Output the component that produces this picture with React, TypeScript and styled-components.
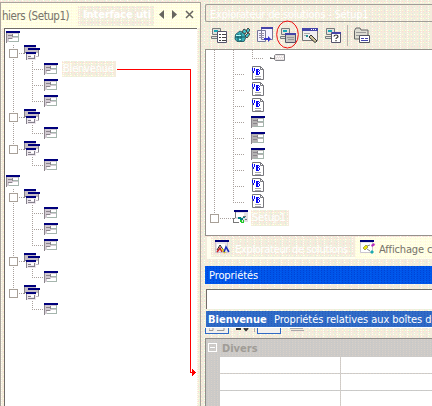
import React from "react";
import styled, { createGlobalStyle, css } from "styled-components";

const Global = createGlobalStyle`
  body { margin: 0; background: #ece9d8; overflow: hidden; }
  * { box-sizing: border-box; }
  svg { display: block; flex: none; }
`;

/* One coloured pixel, repeated on a w × h tile */
const speck = (color: string, w: number, h: number, x: number, y: number) =>
  `conic-gradient(from 0deg at ${w - 1}px 1px, ${color} 25%, transparent 0) ${x}px ${y}px / ${w}px ${h}px`;

const dither = css`
  background:
    ${speck("#dafad6", 5, 3, 0, 0)},
    ${speck("#ffd9d4", 3, 5, 1, 1)},
    ${speck("#fffff2", 7, 2, 2, 0)},
    ${speck("#e0e6e2", 7, 3, 0, 1)},
    ${speck("#ffffd6", 3, 4, 1, 2)},
    #f4ecdd;
`;

const paleDither = css`
  background: ${speck("#fffff4", 2, 3, 0, 0)}, ${speck("#fff0df", 5, 3, 1, 1)}, #ffffe0;
`;

const Window = styled.div`
  width: 432px;
  height: 406px;
  display: flex;
  overflow: hidden;
  font: 11px/16px "DejaVu Sans Condensed", "DejaVu Sans", sans-serif;
  font-stretch: condensed;
  white-space: nowrap;
  position: relative;
  ${dither}
`;

const LeftPane = styled.div`
  width: 201px;
  flex: none;
  margin-top: 2px;
  border: solid #aaa49c;
  border-width: 1px 1px 0 1px;
  display: flex;
  flex-direction: column;
`;

const TabStrip = styled.div`
  height: 25px;
  display: flex;
  align-items: center;
  padding: 0 9px 0 1px;
  color: #77736a;
  ${paleDither}
`;

const FileTab = styled.span`
  width: 76px;
  flex: none;
  font-size: 11.5px;
  letter-spacing: -0.45px;
`;

const ActiveTab = styled.span`
  width: 76px;
  height: 20px;
  padding-left: 5px;
  font-weight: bold;
  font-size: 11px;
  line-height: 18px;
  letter-spacing: -0.1px;
  color: #ffffff;
  ${dither}
`;

const TabControls = styled.div`
  margin-left: auto;
  margin-right: -4px;
  margin-top: -3px;
`;

const FileTree = styled.div`
  flex: 1;
  margin: 0 3px 0 3px;
  border: solid #6f6b66;
  border-width: 1px 0 0 1px;
  background: #fff;
`;

const Row = styled.div`
  height: 16px;
  display: flex;
  align-items: flex-start;
`;

const vDots = "repeating-linear-gradient(#a8a09c 0 1px, transparent 1px 2px)";
const hDots = "repeating-linear-gradient(90deg, #a8a09c 0 1px, transparent 1px 2px)";

type Line = "none" | "full" | "half";

const Guide = styled.span<{ $w: number; $x: number; $line: Line; $branch?: boolean }>`
  width: ${(p) => p.$w}px;
  height: 16px;
  flex: none;
  background-image: ${vDots}, ${hDots};
  background-repeat: no-repeat;
  background-position: ${(p) => p.$x}px 0, ${(p) => p.$x}px 8px;
  background-size:
    ${(p) => (p.$line === "none" ? "0 0" : p.$line === "full" ? "1px 16px" : "1px 9px")},
    ${(p) => (p.$branch ? `${p.$w - p.$x}px 1px` : "0 0")};
`;

const Expander = styled.span<{ $left: number }>`
  display: block;
  width: 9px;
  height: 9px;
  margin: 4px 0 0 ${(p) => p.$left}px;
  border: 1px solid #a8a098;
  background: #fff;
`;

const NodeLabel = styled.span<{ $w: number; $gap: number }>`
  width: ${(p) => p.$w}px;
  height: 16px;
  margin-left: ${(p) => p.$gap}px;
  padding-left: 1px;
  color: #ffffff;
  line-height: 16px;
  letter-spacing: -0.2px;
  ${dither}
`;

const Form = ({ dark = false }: { dark?: boolean }) => (
  <svg width="14" height="16" viewBox="0 0 14 16" shapeRendering="crispEdges">
    <path fill={dark ? "#b4b2b2" : "#d2cad2"} d="M0 4h13v9H0z" />
    <path fill="#00007c" d="M0 2h14v2H0z" />
    <path fill="#8b858b" d="M0 4h1v10H0zM2 6h4v1H2zM2 9h4v1H2zM6 5h1v3H6z" />
    <path fill="#fff" d={dark ? "M7 5h5v2H7zM7 9h5v3H7z" : "M7 5h5v2H7zM3 10h9v2H3zM7 9h5v3H7z"} />
    <path fill="#a5b5ad" d="M7 7h5v1H7zM3 12h10v1H3zM12 4h1v9h-1z" />
  </svg>
);

const Group = () => (
  <svg width="16" height="16" viewBox="0 0 16 16" shapeRendering="crispEdges">
    <path fill="#c5bdc5" d="M0 2h12v6H0zM4 5h11v7H4z" />
    <path fill="#85818b" d="M0 2h1v7H0zM1 7h2v1H1zM14 5h1v6h-1z" />
    <path fill="#00007c" d="M0 0h12v2H0zM4 3h12v2H4z" />
    <path fill="#ece5ec" d="M2 8h10v7H2z" />
    <path fill="#00007c" d="M2 7h10v2H2z" />
    <path fill="#85818b" d="M2 9h1v6H2zM4 11h3v1H4zM4 13h7v1H4zM10 10h1v3h-1z" />
    <path fill="#fff" d="M7 10h3v2H7zM12 8h2v3h-2z" />
  </svg>
);

const VB = () => (
  <svg width="14" height="16" viewBox="0 0 14 16">
    <path fill="#fff" stroke="#77777d" d="M1.500.5h8l3 3v10h-11z" />
    <path fill="none" stroke="#77777d" d="M9.500.5v3h3" />
    <path fill="#0808f4" shapeRendering="crispEdges" d="M1 2h1v3H1zM2 5h1v2H2zM3 2h1v3H3zM5 3h2v6H5zM7 3h1v1H7zM7 5h1v1H7zM7 8h1v1H7zM8 4h1v1H8zM8 6h1v2H8z" />
    <path stroke="#a8a8ae" d="M4 10.500h6M4 12.500h6" />
  </svg>
);

const Tag = () => (
  <svg width="16" height="16" viewBox="0 0 16 16">
    <path fill="#e7e1e1" stroke="#85858a" d="M5.500 4.500h9v6h-9l-1-1v-4z" />
    <path fill="none" stroke="#666" d="M0 8.500h5M2 8l1 1M0 7.500l2 1" />
    <path stroke="#fff" strokeDasharray="1 1" d="M6 6.500h8M7 8.500h7" />
  </svg>
);

const SetupIcon = () => (
  <svg width="16" height="16" viewBox="0 0 16 16" shapeRendering="crispEdges">
    <path fill="#e3dfe5" d="M2 2h13v10H2z" />
    <path fill="#00007c" d="M1 0h14v2H1z" />
    <path fill="#fff" d="M3 3h8v4H3zM0 9h7v3H0z" />
    <path fill="#777" d="M2 2h1v6H2zM0 8h2v1H0zM0 9h1v4H0zM1 12h5v1H1zM10 6h3v1h-3zM12 9h2v1h-2z" />
    <path fill="#008080" d="M5 7h3v2H5zM7 8h3v2H7zM10 7h2v1h-2z" />
    <path fill="#22c928" d="M7 10h2v2H7zM8 12h3v1H8zM10 10h1v2h-1z" />
  </svg>
);

type FileRow = { kind: "root" | "group" | "form"; outer?: Line; inner?: Line; label?: string };

const files: FileRow[] = [
  { kind: "root" },
  { kind: "group", outer: "full" },
  { kind: "form", outer: "full", inner: "full", label: "Bienvenue" },
  { kind: "form", outer: "full", inner: "full" },
  { kind: "form", outer: "full", inner: "half" },
  { kind: "group", outer: "full" },
  { kind: "form", outer: "full", inner: "half" },
  { kind: "group", outer: "half" },
  { kind: "form", outer: "none", inner: "half" },
  { kind: "root" },
  { kind: "group", outer: "full" },
  { kind: "form", outer: "full", inner: "full" },
  { kind: "form", outer: "full", inner: "full" },
  { kind: "form", outer: "full", inner: "half" },
  { kind: "group", outer: "full" },
  { kind: "form", outer: "full", inner: "half" },
  { kind: "group", outer: "half" },
  { kind: "form", outer: "none", inner: "half" },
];

const FileNode = ({ kind, outer = "none", inner = "none", label }: FileRow) => {
  if (kind === "root")
    return <Row><Guide $w={1} $x={0} $line="none" /><Form /></Row>;
  return (
    <Row>
      <Guide $w={19} $x={8} $line={outer} $branch={kind === "group"}>
        {kind === "group" && <Expander $left={4} />}
      </Guide>
      {kind === "group" ? <Group /> : (
        <>
          <Guide $w={20} $x={8} $line={inner} $branch />
          <Form />
          {label && <NodeLabel $w={54} $gap={4}>{label}</NodeLabel>}
        </>
      )}
    </Row>
  );
};

const RightPane = styled.div`
  flex: 1;
  min-width: 0;
  padding: 4px 0 0 4px;
  display: flex;
  flex-direction: column;
`;

const ExplorerTitle = styled.div`
  height: 18px;
  flex: none;
  border: 1px solid #a19d98;
  border-right: 0;
  border-radius: 2px 0 0 2px;
  padding-left: 4px;
  line-height: 20px;
  letter-spacing: -0.22px;
  color: #ffffff;
`;

const Toolbar = styled.div`
  height: 27px;
  flex: none;
  display: flex;
  align-items: center;
  padding: 0 0 0 6px;
  gap: 7px;
`;

const Separator = styled.span`
  width: 1px;
  height: 21px;
  margin: 0 -1px 0 -1px;
  background: #bcb6af;
`;

const Marked = styled.span`
  position: relative;
  margin-right: -1px;
`;

const RedRing = styled.svg`
  position: absolute;
  left: -4px;
  top: -7px;
`;

const Monitor = () => (
  <>
    <path fill="#e2e2dd" stroke="#777a7c" d="M1.500 1.500h8v6h-8zM.5 9.500h8v2h-8z" />
    <path fill="#18a7b5" d="M3 3h4v2H3z" />
  </>
);

const HeaderWindow = () => (
  <>
    <path fill="#fff" stroke="#55556a" d="M6.500 5.500h9v10h-9z" />
    <path fill="#4444a8" d="M7 5h9v2H7z" />
  </>
);

const ToolIcon = ({ name }: { name: string }) => (
  <svg width="16" height="17" viewBox="0 0 16 17">
    {name === "files" && <><Monitor /><path fill="#fff" stroke="#55556a" d="M6.500 4.500h9v11h-9z" /><path stroke="#444" d="M8 7.500h2M11 7.500h4M8 10.500h2M11 10.500h4M8 13.500h2M11 13.500h4" /></>}
    {name === "registry" && <>
      <path fill="#3cb1ba" stroke="#32636c" d="M1.500 7.500 6 4l4 2 2 4-2 4.500H3L1 12z" />
      <path fill="#42c4ca" stroke="#444" d="m8 5 2-3 3 2-2 3zM12 4l2-3 2 2-2 3zM11 9l3-3 2 1-3 4z" />
      <path fill="none" stroke="#17565f" d="M1 10h10M4 7v7M7 6v9" /><path stroke="#b9ffff" d="M2 8.500h5M5 12.500h2" />
    </>}
    {name === "types" && <>
      <path fill="#f5f3ff" stroke="#777799" d="M4.500.5h11v12h-11zM.5 3.500h8v11h-8z" />
      <path fill="#4444a8" d="M4 0h12v2H4z" /><path stroke="#9690a7" d="M2 6.500h5M2 8.500h5M2 10.500h5" />
      <path fill="#3434cc" d="M7 11h4V9l3 3-3 3v-2H7z" />
    </>}
    {name === "ui" && <><Monitor /><path fill="#c8c6c2" stroke="#55556a" d="M5.500 6.500h10v9h-10z" /><path fill="#4444a8" d="M5 6h11v2H5z" /><path stroke="#999" d="M7 10.500h7M8 12.500h6" /></>}
    {name === "actions" && <>
      <path fill="#f0eff0" stroke="#777" d="M.5 1.500h15v12H.5z" /><path fill="#4444a8" d="M0 1h16v3H0z" />
      <path stroke="#fff" strokeDasharray="1 1" d="M9 2.500h6" />
      <path stroke="#aaa" d="M2 6.500h6M2 8.500h3" /><path fill="#d1c79b" stroke="#333" d="m7 10 2-2 6 6-2 1.500z" /><path fill="#248f93" d="M4 8h2v2H4z" />
    </>}
    {name === "launch" && <><Monitor /><HeaderWindow /><path fill="none" stroke="#333" strokeWidth="1.200" d="M9 9.500c0-2 4-2 4 0 0 1.500-2 1-2 2.500M11 13v1.300" /></>}
    {name === "folders" && <>
      <path fill="#dddcd2" stroke="#666" d="M.5 3.500 2 1h4l1 2h7v9H.5z" /><path stroke="#999" d="M2 5.500h10M2 8.500h3" />
      <path fill="#fff" stroke="#555560" d="M5.500 8.500h10v7h-10z" /><path stroke="#4444a8" d="M7 11.500h3M11 11.500h3M7 13.500h7" />
    </>}
  </svg>
);

const SolutionTree = styled.div`
  height: 187px;
  flex: none;
  border: solid #96918c;
  border-width: 1px 0 1px 1px;
  background: #fff;
`;

const BottomTabs = styled.div`
  height: 22px;
  flex: none;
  margin-top: 1px;
  padding-left: 2px;
  display: flex;
`;

const BottomTab = styled.div<{ $active?: boolean }>`
  width: ${(p) => (p.$active ? 148 : 77)}px;
  flex: none;
  height: 22px;
  padding: ${(p) => (p.$active ? "2px 0 0 4px" : "2px 0 0 5px")};
  border: ${(p) => (p.$active ? "solid #fffff0" : "0")};
  border-width: ${(p) => (p.$active ? "0 0 2px 4px" : "0")};
  display: flex;
  gap: ${(p) => (p.$active ? 4 : 3)}px;
  color: ${(p) => (p.$active ? "#ffffff" : "#77736a")};
  letter-spacing: ${(p) => (p.$active ? "-0.32px" : "-0.15px")};
  line-height: 21px;
  ${(p) => (p.$active ? dither : paleDither)}
`;

const TabIcon = ({ tools = false }: { tools?: boolean }) => (
  <svg width="16" height="16" viewBox="0 0 16 16">
    <path fill="#e8e3e9" stroke="#cbc6cf" d="M.5 1.500h12v12H.5z" />
    <path fill="#00007c" d="M0 1h14v2H0z" />
    {tools
      ? <><path fill="#fff" d="M1 4h11v9H1z" /><path stroke="#888" d="M7 7l3-1M7 10l3 2" /><path fill="#ece313" stroke="#7b791d" strokeWidth=".6" d="m3 9 3-3 2 2-3 3z" /><path fill="#b92dbd" d="m11 6 3-2 1 2-3 2z" /><path fill="#19aab0" d="m10 13 2-2 2 2-2 2z" /></>
      : <><path fill="#fff" d="M2 5h8v5H2z" /><path fill="none" stroke="#222" d="M2 11l3-5 4 6" /><path fill="none" stroke="#d02020" strokeWidth="1.500" d="m2 13 3-4 2 4" /><path stroke="#e0cc16" strokeWidth="2" d="m7 10 3 4" /><path fill="none" stroke="#1a2bbb" strokeWidth="1.500" d="m9 13 2-5 3 5" /></>}
  </svg>
);

const PropertiesTitle = styled.div`
  height: 18px;
  flex: none;
  margin-top: 7px;
  padding-left: 4px;
  line-height: 20px;
  letter-spacing: -0.1px;
  color: #fff;
  background: ${speck("#0044d4", 3, 2, 0, 0)}, ${speck("#0066ee", 5, 3, 1, 0)}, #0055ea;
`;

const ObjectBox = styled.div`
  height: 20px;
  flex: none;
  margin: 5px 0 0 1px;
  border: solid #726d68;
  border-width: 1px 0 0 1px;
  background: #fff;
`;

const ObjectRow = styled.div`
  height: 17px;
  flex: none;
  margin: 2px 0 0 1px;
  padding-left: 2px;
  border-bottom: 1px solid #fff;
  display: flex;
  gap: 7px;
  line-height: 17px;
  color: #fff;
  background: ${speck("#225cc0", 3, 2, 0, 0)}, ${speck("#3377cc", 5, 3, 1, 0)}, #316ac5;
`;

const ObjectName = styled.b`
  width: 59px;
  flex: none;
`;

const ObjectType = styled.span`
  letter-spacing: -0.07px;
`;

const PropertyTools = styled.div`
  height: 10px;
  flex: none;
  display: flex;
  align-items: flex-start;
`;

const ToolStub = styled.span`
  width: 24px;
  height: 6px;
  border: solid #316ac5;
  border-width: 0 1px 1px;
  background: #f2f0ee;
  display: flex;
  justify-content: center;
`;

const PropertyGrid = styled.div`
  flex: 1;
  border: solid #918d88;
  border-width: 1px 0 0 1px;
  background: ${speck("#d8d0c8", 3, 2, 0, 0)}, ${speck("#c4c8c8", 5, 3, 1, 0)}, #cccac8;
`;

const Category = styled.div`
  height: 18px;
  padding: 1px 0 0 2px;
  display: flex;
  align-items: center;
  gap: 5px;
  color: #a09c96;
  font-weight: bold;
`;

const Collapse = styled.span`
  width: 9px;
  height: 9px;
  margin-top: -2px;
  border: 1px solid #fff;
  background: linear-gradient(#fff, #fff) center / 5px 1px no-repeat;
`;

const Cells = styled.div`
  margin-left: 14px;
  display: grid;
  grid-template-columns: 120px 1fr;
  grid-auto-rows: 16px;
  gap: 1px;
`;

const Cell = styled.span`
  background: #fff;
`;

const Connector = styled.svg`
  position: absolute;
  left: 117px;
  top: 68px;
`;

const solution = ["tag", "vb", "vb", "vb", "form", "form", "form", "vb", "vb", "vb"];

export default function App() {
  return (
    <Window>
      <Global />
      <LeftPane>
        <TabStrip>
          <FileTab>hiers (Setup1)</FileTab>
          <ActiveTab>Interface uti</ActiveTab>
          <TabControls>
            <svg width="36" height="11" viewBox="0 0 36 11">
              <path fill="#66645e" d="M5 1v9L0 5.500zM13 1v9l5-4.500z" />
              <path fill="none" stroke="#66645e" strokeWidth="1.500" d="m27 2 7 7M34 2l-7 7" />
            </svg>
          </TabControls>
        </TabStrip>
        <FileTree>
          {files.map((f, i) => <FileNode key={i} {...f} />)}
        </FileTree>
      </LeftPane>
      <RightPane>
        <ExplorerTitle>Explorateur de solutions - Setup1</ExplorerTitle>
        <Toolbar>
          <ToolIcon name="files" />
          <ToolIcon name="registry" />
          <ToolIcon name="types" />
          <Marked>
            <ToolIcon name="ui" />
            <RedRing width="24" height="29" viewBox="0 0 24 29">
              <ellipse cx="11.500" cy="14.500" rx="10.800" ry="13.500" fill="none" stroke="#f01010" />
            </RedRing>
          </Marked>
          <ToolIcon name="actions" />
          <ToolIcon name="launch" />
          <Separator />
          <ToolIcon name="folders" />
        </Toolbar>
        <SolutionTree>
          {solution.map((kind, i) => (
            <Row key={i}>
              <Guide $w={19} $x={8} $line="full" />
              <Guide $w={kind === "tag" ? 19 : 20} $x={8} $line={i === 9 ? "half" : "full"} $branch={kind !== "tag"} />
              {kind === "tag" && <><Guide $w={20} $x={8} $line="half" $branch /><Guide $w={6} $x={0} $line="none" /><Tag /></>}
              {kind !== "tag" && <Guide $w={6} $x={0} $line="none" />}
              {kind === "vb" && <VB />}
              {kind === "form" && <Form dark />}
            </Row>
          ))}
          <Row>
            <Guide $w={27} $x={8} $line="half" $branch><Expander $left={4} /></Guide>
            <SetupIcon />
            <NodeLabel $w={38} $gap={2}>Setup1</NodeLabel>
          </Row>
        </SolutionTree>
        <BottomTabs>
          <BottomTab $active><TabIcon />Explorateur de solutions</BottomTab>
          <BottomTab><TabIcon tools />Affichage c</BottomTab>
        </BottomTabs>
        <PropertiesTitle>Propriétés</PropertiesTitle>
        <ObjectBox />
        <ObjectRow>
          <ObjectName>Bienvenue</ObjectName>
          <ObjectType>Propriétés relatives aux boîtes d</ObjectType>
        </ObjectRow>
        <PropertyTools>
          <ToolStub><svg width="16" height="4"><path fill="none" stroke="#999" d="M0 0v2.500h4V0M8 2.500h7V0" /></svg></ToolStub>
          <svg width="28" height="6"><path fill="none" stroke="#333" strokeWidth="2" d="M7 1h5M9 0v2M15 0l2 2 2-2" /><path stroke="#aaa" d="M25.500 0v4" /></svg>
          <ToolStub />
          <svg width="28" height="6"><path stroke="#aaa" d="M9 .5h13M10 2.500h13" /></svg>
        </PropertyTools>
        <PropertyGrid>
          <Category><Collapse />Divers</Category>
          <Cells>
            {Array.from({ length: 6 }, (_, i) => <Cell key={i} />)}
          </Cells>
        </PropertyGrid>
      </RightPane>
      <Connector width="82" height="312" viewBox="0 0 82 312" shapeRendering="crispEdges">
        <path fill="none" stroke="#ff0000" d="M0 1.500h73.500v303h3" />
        <path fill="#ff0000" d="M75 301h1v1h1v1h1v1h1v1h-1v1h-1v1h-1v1h-1z" />
      </Connector>
    </Window>
  );
}
